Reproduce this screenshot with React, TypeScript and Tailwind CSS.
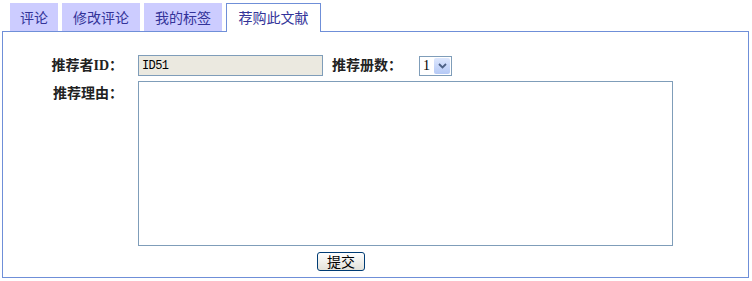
import { useState } from 'react';

const tabs = [
  { label: '评论', width: 'w-[48px]' },
  { label: '修改评论', width: 'w-[78px]' },
  { label: '我的标签', width: 'w-[78px]' },
];

function Tab({ label, width }: { label: string; width: string }) {
  return (
    <div
      className={`${width} h-[28px] bg-[#ccccff] text-[#333399] text-[14px] leading-[28px] text-center`}
    >
      {label}
    </div>
  );
}

const labelFont = { fontFamily: '"Liberation Serif", "Noto Sans CJK SC", serif' };

export default function App() {
  const [reason, setReason] = useState('');
  const [count, setCount] = useState('1');

  return (
    <div
      className="w-[752px] h-[281px] bg-white"
      style={{ fontFamily: '"SimSun", "Noto Sans CJK SC", sans-serif' }}
    >
      {/* tab strip */}
      <div className="flex items-end gap-[4px] pl-[10px] pt-[3px]">
        {tabs.map((t) => (
          <Tab key={t.label} label={t.label} width={t.width} />
        ))}
        <div className="relative z-10 w-[95px] h-[29px] -mb-px border border-b-0 border-[#6f8fd8] bg-white text-[#333399] text-[14px] leading-[27px] text-center">
          荐购此文献
        </div>
      </div>

      {/* panel */}
      <div className="ml-[2px] w-[747px] h-[247px] border border-[#6f8fd8] pt-[23px]">
        <div className="flex items-center">
          <div className="w-[120px] text-right text-[14px] font-bold text-[#222]" style={labelFont}>
            推荐者ID：
          </div>
          <input
            readOnly
            value="ID51"
            className="ml-[15px] w-[185px] h-[21px] border border-[#7f9db9] bg-[#ebe9e0] px-[3px] text-[12px] tracking-[-0.6px] text-black outline-none"
            style={{ fontFamily: '"Liberation Mono", monospace' }}
          />
          <div className="ml-[9px] w-[87px] text-[14px] font-bold text-[#222]" style={labelFont}>
            推荐册数：
          </div>
          <div className="flex h-[20px] w-[33px] items-center border border-[#7f9db9] bg-white">
            <select
              value={count}
              onChange={(e) => setCount(e.target.value)}
              className="w-[14px] appearance-none bg-transparent pl-[3px] text-[14px] leading-none text-black outline-none"
              style={{ fontFamily: '"Liberation Serif", serif' }}
            >
              <option>1</option>
              <option>2</option>
              <option>3</option>
            </select>
            <div className="ml-auto mr-px flex h-[16px] w-[16px] items-center justify-center rounded-[2px] bg-gradient-to-b from-[#dde7fd] to-[#b5c9f6]">
              <svg width="9" height="6" viewBox="0 0 9 6">
                <path d="M1 1 L4.5 4.5 L8 1" fill="none" stroke="#4d6185" strokeWidth="1.8" />
              </svg>
            </div>
          </div>
        </div>

        <div className="mt-[5px] flex items-start">
          <div className="w-[120px] pt-[2px] text-right text-[14px] font-bold text-[#222]" style={labelFont}>
            推荐理由：
          </div>
          <textarea
            value={reason}
            onChange={(e) => setReason(e.target.value)}
            className="ml-[15px] w-[535px] h-[165px] resize-none border border-[#7f9db9] bg-white outline-none"
          />
        </div>

        <div className="mt-[6px] flex pl-[314px]">
          <button className="w-[48px] h-[19px] rounded-[3px] border border-[#003c74] bg-gradient-to-b from-white to-[#e3e2da] text-[14px] leading-[17px] text-black">
            提交
          </button>
        </div>
      </div>
    </div>
  );
}
